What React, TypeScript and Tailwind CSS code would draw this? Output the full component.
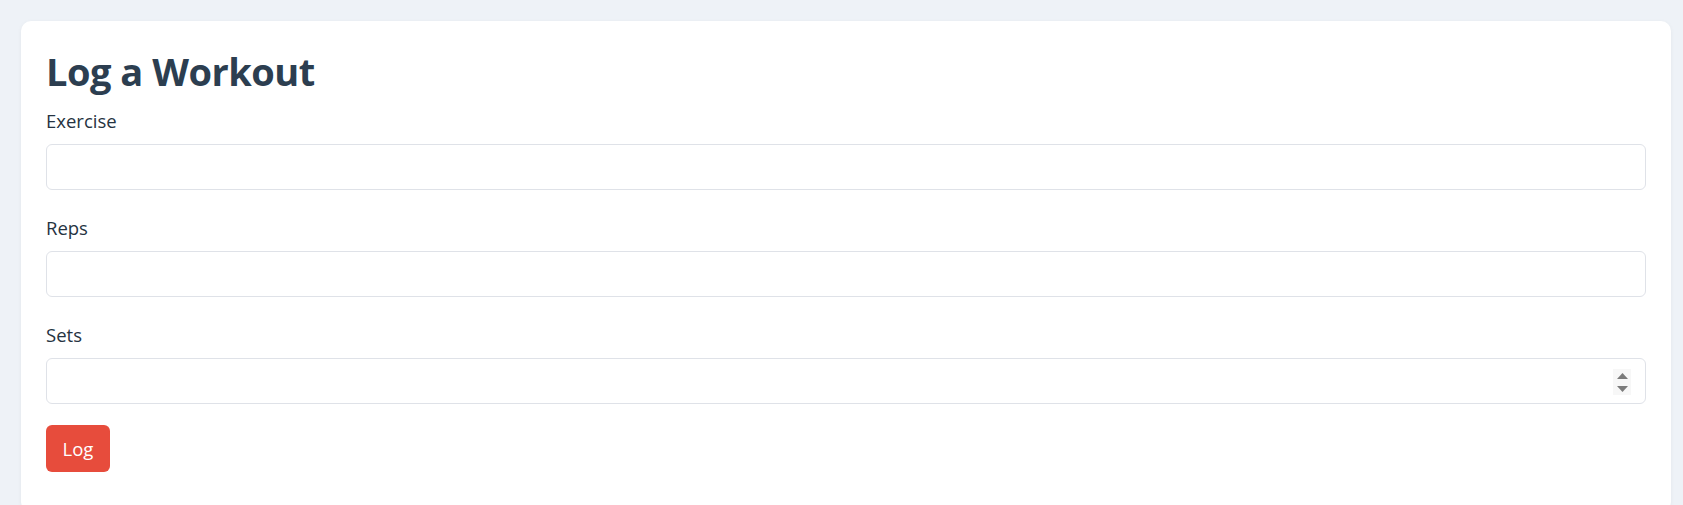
export default function App() {
  const fields = ["Exercise", "Reps", "Sets"];

  return (
    <div
      className="min-h-screen bg-[#eef2f7] pt-[21px] pl-[21px] pr-[12px]"
      style={{ fontFamily: '"Open Sans", "Noto Sans", sans-serif' }}
    >
      <div className="bg-white rounded-[10px] shadow-[0_1px_4px_rgba(0,0,0,0.05)] px-[25px] pt-[25px] pb-[40px]">
        <h1 className="text-[38px] leading-[50px] font-bold tracking-[-0.5px] text-[#2c3e50] mb-[11px]">
          Log a Workout
        </h1>

        {fields.map((label, i) => (
          <div key={label} className={i === 0 ? "" : "mt-[24px]"}>
            <label className="block text-[18.5px] leading-[27px] text-[#253341] mb-[10px]">
              {label}
            </label>
            <div className="relative">
              <input
                type={label === "Exercise" ? "text" : "number"}
                className="block w-full h-[46px] rounded-[6px] border border-[#dfe2e8] px-3 text-[18px] outline-none [appearance:textfield] [&::-webkit-inner-spin-button]:appearance-none [&::-webkit-outer-spin-button]:appearance-none"
              />
              {label === "Sets" && (
                <div className="absolute right-[15px] top-[11px] w-[18px] h-[26px] bg-[#f7f7f7] flex flex-col items-center justify-center gap-[7px]">
                  <svg width="11" height="6" viewBox="0 0 11 6">
                    <path d="M5.5 0 L11 6 L0 6 Z" fill="#7b7b7b" />
                  </svg>
                  <svg width="11" height="6" viewBox="0 0 11 6">
                    <path d="M0 0 L11 0 L5.5 6 Z" fill="#7b7b7b" />
                  </svg>
                </div>
              )}
            </div>
          </div>
        ))}

        <button className="mt-[21px] h-[47px] w-[64px] rounded-[6px] bg-[#e74c3c] text-white text-[18.5px]">
          Log
        </button>
      </div>
    </div>
  );
}
